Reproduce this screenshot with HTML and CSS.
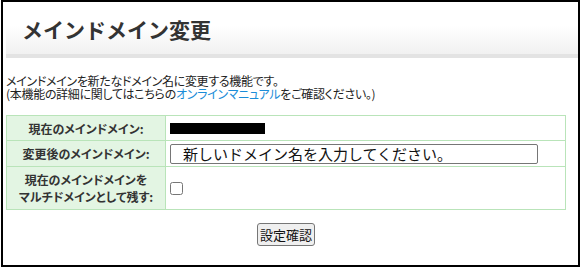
FILE: index.html
```html
<!DOCTYPE html>
<html lang="ja">

<head>
    <meta charset="UTF-8" />
    <meta name="viewport" content="width=device-width, initial-scale=1.0" />
    <title>メインドメイン変更</title>
    <link rel="stylesheet" href="styles.css">
</head>

<body>
    <div class="panel">
        <h1 class="title">メインドメイン変更</h1>
        <p class="lead">
            メインドメインを新たなドメイン名に変更する機能です。<br>
            (本機能の詳細に関してはこちらの<a href="#">オンラインマニュアル</a>をご確認ください。)
        </p>
        <form class="form">
            <table class="settings">
                <tr>
                    <th>現在のメインドメイン:</th>
                    <td><span class="masked"></span></td>
                </tr>
                <tr>
                    <th>変更後のメインドメイン:</th>
                    <td><input type="text" class="domain" placeholder="新しいドメイン名を入力してください。"></td>
                </tr>
                <tr class="tall">
                    <th>現在のメインドメインを<br>マルチドメインとして残す:</th>
                    <td><input type="checkbox" class="keep"></td>
                </tr>
            </table>
            <div class="actions">
                <button type="button">設定確認</button>
            </div>
        </form>
    </div>
</body>

</html>
```

FILE: styles.css
```css
* {
    box-sizing: border-box;
    margin: 0;
    padding: 0;
}

body {
    font-family: "Noto Sans CJK JP", "Noto Sans", sans-serif;
    background: #fff;
    color: #333;
}

.panel {
    width: 579px;
    height: 267px;
    margin-left: 1px;
    border: 2px solid #000;
    padding: 1px 0 0 3px;
}

.title {
    height: 55px;
    padding: 11px 0 0 16px;
    font-size: 21px;
    font-weight: bold;
    line-height: 30px;
    color: #333;
    background: linear-gradient(#fff 0%, #fff 45%, #f1f1f1 100%);
    border-bottom: 4px solid #e3e3e3;
}

.lead {
    margin-top: 16px;
    font-size: 12px;
    line-height: 13px;
    color: #222;
    font-feature-settings: "palt";
    letter-spacing: -0.3px;
}

.lead a {
    color: #1a8cd8;
    text-decoration: none;
}

.settings {
    width: 560px;
    margin-top: 15px;
    border-collapse: collapse;
    font-size: 12px;
}

.settings th,
.settings td {
    border: 1px solid #b9e4b9;
}

.settings th {
    width: 159px;
    height: 25px;
    background: #e3f5e3;
    color: #333;
    font-weight: bold;
    text-align: center;
    line-height: 17px;
    font-feature-settings: "palt";
}

.settings tr:nth-child(2) th {
    height: 26px;
}

.settings tr.tall th {
    height: 43px;
}

.settings td {
    padding-left: 4px;
}

.masked {
    display: block;
    width: 95px;
    height: 11px;
    background: #000;
}

.domain {
    display: block;
    width: 368px;
    height: 20px;
    padding-left: 12px;
    border: 1px solid #767676;
    border-radius: 2px;
    font-family: inherit;
    font-size: 15px;
}

.domain::placeholder {
    color: #111;
}

.keep {
    display: block;
    width: 13px;
    height: 13px;
    margin: 0;
}

.actions {
    width: 560px;
    margin-top: 13px;
    display: flex;
    justify-content: center;
}

.actions button {
    width: 58px;
    height: 23px;
    font-family: inherit;
    font-size: 13px;
    color: #111;
    background: #efefef;
    border: 1px solid #767676;
    border-radius: 3px;
}
```
